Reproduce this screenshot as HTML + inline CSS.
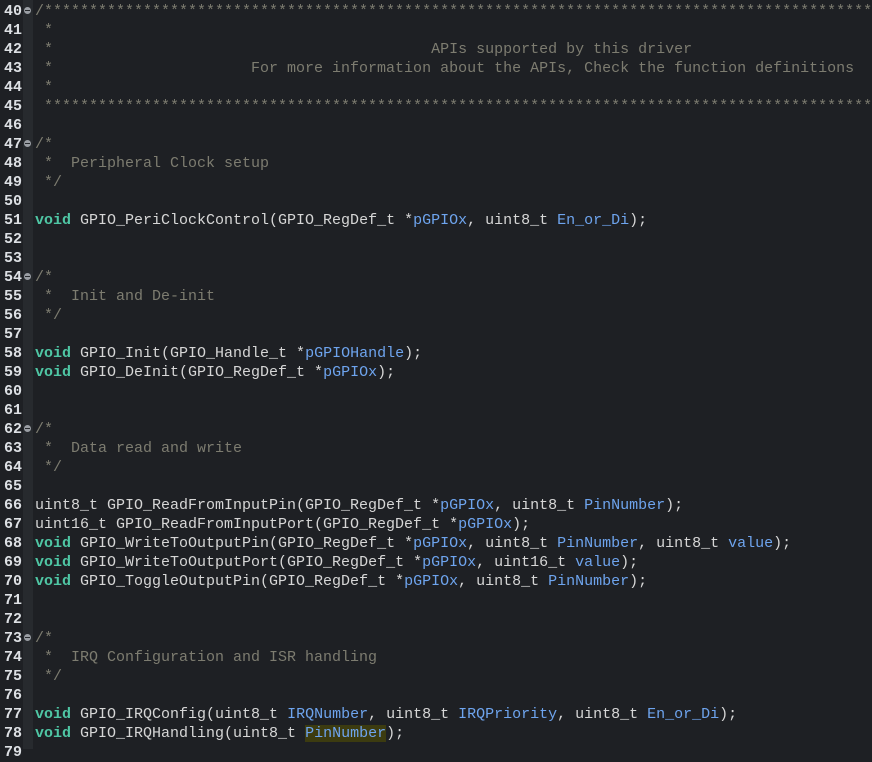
<!DOCTYPE html>
<html><head><meta charset="utf-8"><style>
html,body{margin:0;padding:0;background:#1e2024;width:872px;height:749px;overflow:hidden}
.g{position:absolute;left:23px;top:0;width:10px;height:749px;background:#272a2e}
.l{position:absolute;left:0;height:19px;width:872px;overflow:hidden;white-space:pre;font-family:"Liberation Mono",monospace;font-size:15px;line-height:19px;color:#d6d6d6}
.n{position:absolute;left:4px;color:#dde0e4;font-weight:bold}
.c{position:absolute;left:35px}
.cm{color:#7d7c70}
.k{color:#4fc6a4;font-weight:bold}
.p{color:#6ea4ee}
.hl{background:#3c3b10}
.f{position:absolute;left:24px;top:5px;width:7px;height:7px;border-radius:50%;background:#9a9ea4}
.f:after{content:"";position:absolute;left:1px;top:3px;width:5px;height:1px;background:#272a2e}
</style></head><body>
<div class="g"></div>
<div class="l" style="top:2px"><span class="n">40</span><span class="f"></span><span class="c cm">/**********************************************************************************************</span></div>
<div class="l" style="top:21px"><span class="n">41</span><span class="c cm"> *</span></div>
<div class="l" style="top:40px"><span class="n">42</span><span class="c cm"> *                                          APIs supported by this driver</span></div>
<div class="l" style="top:59px"><span class="n">43</span><span class="c cm"> *                      For more information about the APIs, Check the function definitions</span></div>
<div class="l" style="top:78px"><span class="n">44</span><span class="c cm"> *</span></div>
<div class="l" style="top:97px"><span class="n">45</span><span class="c cm"> **********************************************************************************************</span></div>
<div class="l" style="top:116px"><span class="n">46</span></div>
<div class="l" style="top:135px"><span class="n">47</span><span class="f"></span><span class="c cm">/*</span></div>
<div class="l" style="top:154px"><span class="n">48</span><span class="c cm"> *  Peripheral Clock setup</span></div>
<div class="l" style="top:173px"><span class="n">49</span><span class="c cm"> */</span></div>
<div class="l" style="top:192px"><span class="n">50</span></div>
<div class="l" style="top:211px"><span class="n">51</span><span class="c"><span class="k">void</span> GPIO_PeriClockControl(GPIO_RegDef_t *<span class="p">pGPIOx</span>, uint8_t <span class="p">En_or_Di</span>);</span></div>
<div class="l" style="top:230px"><span class="n">52</span></div>
<div class="l" style="top:249px"><span class="n">53</span></div>
<div class="l" style="top:268px"><span class="n">54</span><span class="f"></span><span class="c cm">/*</span></div>
<div class="l" style="top:287px"><span class="n">55</span><span class="c cm"> *  Init and De-init</span></div>
<div class="l" style="top:306px"><span class="n">56</span><span class="c cm"> */</span></div>
<div class="l" style="top:325px"><span class="n">57</span></div>
<div class="l" style="top:344px"><span class="n">58</span><span class="c"><span class="k">void</span> GPIO_Init(GPIO_Handle_t *<span class="p">pGPIOHandle</span>);</span></div>
<div class="l" style="top:363px"><span class="n">59</span><span class="c"><span class="k">void</span> GPIO_DeInit(GPIO_RegDef_t *<span class="p">pGPIOx</span>);</span></div>
<div class="l" style="top:382px"><span class="n">60</span></div>
<div class="l" style="top:401px"><span class="n">61</span></div>
<div class="l" style="top:420px"><span class="n">62</span><span class="f"></span><span class="c cm">/*</span></div>
<div class="l" style="top:439px"><span class="n">63</span><span class="c cm"> *  Data read and write</span></div>
<div class="l" style="top:458px"><span class="n">64</span><span class="c cm"> */</span></div>
<div class="l" style="top:477px"><span class="n">65</span></div>
<div class="l" style="top:496px"><span class="n">66</span><span class="c">uint8_t GPIO_ReadFromInputPin(GPIO_RegDef_t *<span class="p">pGPIOx</span>, uint8_t <span class="p">PinNumber</span>);</span></div>
<div class="l" style="top:515px"><span class="n">67</span><span class="c">uint16_t GPIO_ReadFromInputPort(GPIO_RegDef_t *<span class="p">pGPIOx</span>);</span></div>
<div class="l" style="top:534px"><span class="n">68</span><span class="c"><span class="k">void</span> GPIO_WriteToOutputPin(GPIO_RegDef_t *<span class="p">pGPIOx</span>, uint8_t <span class="p">PinNumber</span>, uint8_t <span class="p">value</span>);</span></div>
<div class="l" style="top:553px"><span class="n">69</span><span class="c"><span class="k">void</span> GPIO_WriteToOutputPort(GPIO_RegDef_t *<span class="p">pGPIOx</span>, uint16_t <span class="p">value</span>);</span></div>
<div class="l" style="top:572px"><span class="n">70</span><span class="c"><span class="k">void</span> GPIO_ToggleOutputPin(GPIO_RegDef_t *<span class="p">pGPIOx</span>, uint8_t <span class="p">PinNumber</span>);</span></div>
<div class="l" style="top:591px"><span class="n">71</span></div>
<div class="l" style="top:610px"><span class="n">72</span></div>
<div class="l" style="top:629px"><span class="n">73</span><span class="f"></span><span class="c cm">/*</span></div>
<div class="l" style="top:648px"><span class="n">74</span><span class="c cm"> *  IRQ Configuration and ISR handling</span></div>
<div class="l" style="top:667px"><span class="n">75</span><span class="c cm"> */</span></div>
<div class="l" style="top:686px"><span class="n">76</span></div>
<div class="l" style="top:705px"><span class="n">77</span><span class="c"><span class="k">void</span> GPIO_IRQConfig(uint8_t <span class="p">IRQNumber</span>, uint8_t <span class="p">IRQPriority</span>, uint8_t <span class="p">En_or_Di</span>);</span></div>
<div class="l" style="top:724px"><span class="n">78</span><span class="c"><span class="k">void</span> GPIO_IRQHandling(uint8_t <span class="p hl">PinNumber</span>);</span></div>
<div class="l" style="top:743px"><span class="n">79</span></div>
</body></html>
